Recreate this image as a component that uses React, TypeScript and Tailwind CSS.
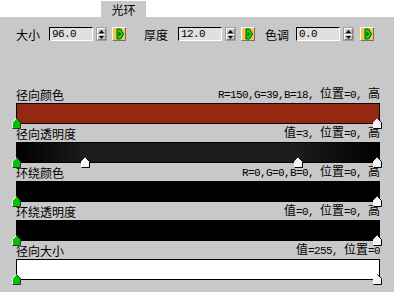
import React from "react";

const cjk = "font-['Noto_Sans_CJK_SC',sans-serif] text-[12px]";
const mono = "font-['Liberation_Mono',monospace] text-[11px] tracking-[-0.6px]";

// SimSun-like mix: half-width latin 6px, full-width CJK 12px
function T({ s }: { s: string }) {
  const runs = s.match(/[\x00-\x7f]+|[^\x00-\x7f]+/g) ?? [];
  return (
    <span className="whitespace-pre leading-[12px] text-black">
      {runs.map((r, i) => (
        <span key={i} className={/^[\x00-\x7f]/.test(r) ? mono : cjk}>
          {r}
        </span>
      ))}
    </span>
  );
}

function Spinner() {
  return (
    <div className="flex flex-col w-[11px] h-[14px] bg-[#c8c8c8] border border-[#a0a0a0]">
      <div className="flex-1 flex items-center justify-center border-t border-l border-white border-b border-r border-b-[#808080] border-r-[#808080]">
        <svg width="5" height="3" viewBox="0 0 5 3">
          <path d="M0 3 L2.5 0 L5 3 Z" fill="#000" />
        </svg>
      </div>
      <div className="flex-1 flex items-center justify-center border-t border-l border-white border-b border-r border-b-[#808080] border-r-[#808080]">
        <svg width="5" height="3" viewBox="0 0 5 3">
          <path d="M0 0 L2.5 3 L5 0 Z" fill="#000" />
        </svg>
      </div>
    </div>
  );
}

function KeyButton() {
  return (
    <div className="w-[14px] h-[14px] border border-t-white border-l-white border-b-[#707070] border-r-[#707070]">
      <svg width="12" height="12" viewBox="0 0 12 12">
        <rect x="0" y="0" width="12" height="12" fill="#f4c458" />
        <path d="M4 1 H7.5 L10.5 6 L7.5 11 H4 Z" fill="#10e010" stroke="#005000" strokeWidth="1" />
        <path d="M5.5 3.5 L8.5 6 L5.5 8.5 Z" fill="#007000" />
      </svg>
    </div>
  );
}

function Field({ value }: { value: string }) {
  return (
    <div className="w-[44px] h-[14px] bg-[#e0e0e0] border border-t-black border-l-black border-b-white border-r-white flex items-center pl-[2px]">
      <span className={`${mono} leading-[11px] text-black`}>{value}</span>
    </div>
  );
}

function Marker({ left, green }: { left: number; green?: boolean }) {
  return (
    <svg
      width="9"
      height="11"
      viewBox="0 0 9 11"
      className="absolute top-[15px]"
      style={{ left }}
    >
      <path d="M0.5 10.5 V4.5 L4.5 0.5 L8.5 4.5 V10.5 Z" fill={green ? "#00c400" : "#f4f4f4"} />
      <path d="M0.5 10.5 V4.5 L4.5 0.5" fill="none" stroke="#ffffff" />
      <path d="M4.5 0.5 L8.5 4.5 V10.5 H0.5" fill="none" stroke={green ? "#303030" : "#000"} />
    </svg>
  );
}

type Section = {
  label: string;
  info: string;
  bar: string;
  markers: { left: number; green?: boolean }[];
};

const sections: Section[] = [
  {
    label: "径向颜色",
    info: "R=150,G=39,B=18, 位置=0, 高",
    bar: "bg-[#962712]",
    markers: [{ left: -4, green: true }, { left: 357 }],
  },
  {
    label: "径向透明度",
    info: "值=3, 位置=0, 高",
    bar: "bg-[linear-gradient(to_right,#000_0%,#1c1c1c_19%,#1c1c1c_77%,#000_100%)]",
    markers: [{ left: -4, green: true }, { left: 65 }, { left: 278 }, { left: 357 }],
  },
  {
    label: "环绕颜色",
    info: "R=0,G=0,B=0, 位置=0, 高",
    bar: "bg-black",
    markers: [{ left: -4, green: true }, { left: 357 }],
  },
  {
    label: "环绕透明度",
    info: "值=0, 位置=0, 高",
    bar: "bg-black",
    markers: [{ left: -4, green: true }, { left: 357 }],
  },
  {
    label: "径向大小",
    info: "值=255, 位置=0",
    bar: "bg-white",
    markers: [{ left: -4, green: true }, { left: 357 }],
  },
];

export default function App() {
  return (
    <div className="w-[394px] h-[292px] bg-white overflow-hidden flex flex-col">
      <div className="h-[17px] flex shrink-0">
        <div className="ml-[100px] w-[46px] h-[17px] bg-[#c8c8c8] border-l border-t border-white flex items-center justify-center">
          <T s="光环" />
        </div>
      </div>

      <div className="flex-1 bg-[#c8c8c8] pt-[10px]">
        <div className="flex items-center h-[14px] pl-[16px]">
          <T s="大小" />
          <div className="ml-[9px]"><Field value="96.0" /></div>
          <div className="ml-[3px]"><Spinner /></div>
          <div className="ml-[5px]"><KeyButton /></div>

          <div className="ml-[18px]"><T s="厚度" /></div>
          <div className="ml-[10px]"><Field value="12.0" /></div>
          <div className="ml-[3px]"><Spinner /></div>
          <div className="ml-[5px]"><KeyButton /></div>

          <div className="ml-[10px]"><T s="色调" /></div>
          <div className="ml-[7px]"><Field value="0.0" /></div>
          <div className="ml-[3px]"><Spinner /></div>
          <div className="ml-[6px]"><KeyButton /></div>
        </div>

        <div className="mt-[44px] ml-[16px] w-[364px] flex flex-col">
          {sections.map((s) => (
            <div key={s.label} className="flex flex-col">
              <div className="h-[18px] flex items-end justify-between pb-[2px]">
                <T s={s.label} />
                <T s={s.info} />
              </div>
              <div className="relative">
                <div className={`h-[21px] border border-black ${s.bar}`} />
                {s.markers.map((m, i) => (
                  <Marker key={i} left={m.left} green={m.green} />
                ))}
              </div>
            </div>
          ))}
        </div>
      </div>
    </div>
  );
}
